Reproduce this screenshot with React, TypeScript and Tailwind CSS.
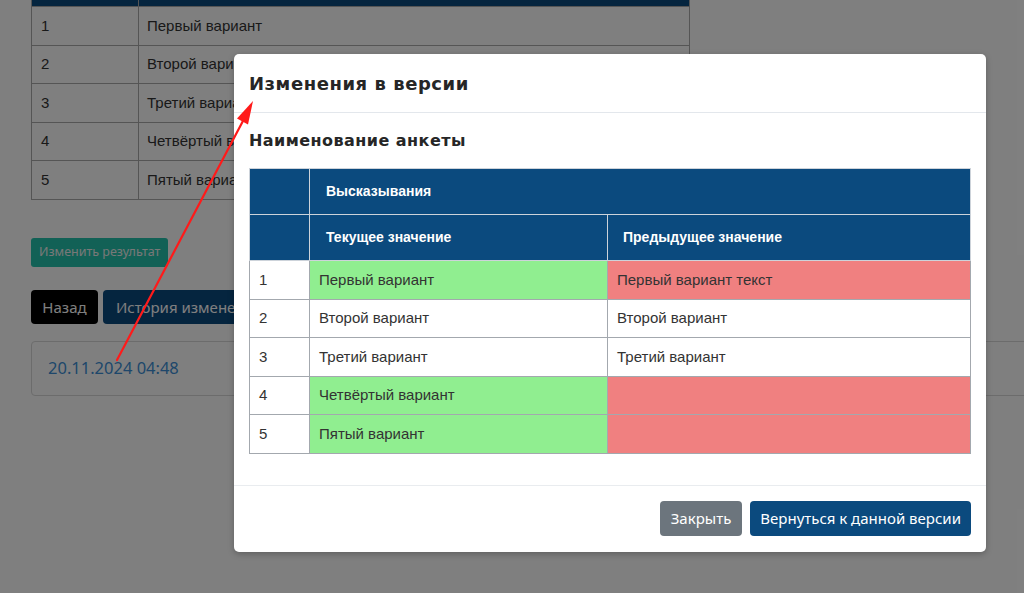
import React from "react";

const rows = [
  { n: "1", cur: "Первый вариант", prev: "Первый вариант текст", curBg: "bg-[#90ee90]", prevBg: "bg-[#f08080]" },
  { n: "2", cur: "Второй вариант", prev: "Второй вариант", curBg: "bg-white", prevBg: "bg-white" },
  { n: "3", cur: "Третий вариант", prev: "Третий вариант", curBg: "bg-white", prevBg: "bg-white" },
  { n: "4", cur: "Четвёртый вариант", prev: "", curBg: "bg-[#90ee90]", prevBg: "bg-[#f08080]" },
  { n: "5", cur: "Пятый вариант", prev: "", curBg: "bg-[#90ee90]", prevBg: "bg-[#f08080]" },
];

const bgRows = ["Первый вариант", "Второй вариант", "Третий вариант", "Четвёртый вариант", "Пятый вариант"];

export default function App() {
  return (
    <div className="relative w-[1024px] h-[593px] overflow-hidden bg-white font-['Liberation_Sans',Arial,sans-serif]">
      {/* background page */}
      <div className="pl-[31px] -mt-[34px]">
        <table className="w-[659px] border-collapse text-[15px] text-[#333]">
          <thead>
            <tr className="bg-[#0b4a7e]">
              <th className="w-[107px] h-[40px] border border-[#aaaaaa]"></th>
              <th className="h-[40px] border border-[#aaaaaa]"></th>
            </tr>
          </thead>
          <tbody>
            {bgRows.map((t, i) => (
              <tr key={i}>
                <td className="h-[38.6px] border border-[#aaaaaa] pl-[9px]">{i + 1}</td>
                <td className="h-[38.6px] border border-[#aaaaaa] pl-[8px]">{t}</td>
              </tr>
            ))}
          </tbody>
        </table>
        <div className="mt-[38px] font-['Noto_Sans',sans-serif]">
          <button className="h-[29px] px-[8px] rounded-[3px] bg-[#24c2ac] text-[#f0f0f0] text-[12.5px]">
            Изменить результат
          </button>
        </div>
        <div className="mt-[23px] flex gap-[5px] font-['Noto_Sans',sans-serif]">
          <button className="h-[34px] w-[67px] rounded-[4px] bg-black text-white text-[15px]">Назад</button>
          <button className="h-[34px] px-[13px] rounded-[4px] bg-[#0b4a7e] text-white text-[15px]">
            История изменений
          </button>
        </div>
        <div className="mt-[17px] w-[1100px] h-[55px] rounded-[4px] border border-[#d8d8d8] flex items-center pl-[16px] font-['Noto_Sans',sans-serif] text-[16.5px] text-[#3c8fd6]">
          20.11.2024 04:48
        </div>
      </div>

      {/* overlay */}
      <div className="absolute inset-0 bg-black/50"></div>

      {/* modal */}
      <div className="absolute left-[234px] top-[54px] w-[752px] bg-white rounded-[5px] shadow-[0_2px_6px_rgba(0,0,0,0.25)]">
        <div className="h-[59px] px-[15px] flex items-center border-b border-[#e3e7ec]">
          <h2 className="font-['DejaVu_Sans',sans-serif] font-bold text-[18px] text-[#262626] tracking-[0.55px]">
            Изменения в версии
          </h2>
        </div>
        <div className="px-[15px] pt-[16px] pb-[31px]">
          <h3 className="font-['DejaVu_Sans',sans-serif] font-bold text-[16px] leading-[24px] text-[#262626] tracking-[0.45px] mb-[15px]">
            Наименование анкеты
          </h3>
          <table className="w-[722px] border-collapse text-[15px] text-[#333]">
            <thead>
              <tr className="bg-[#0b4a7e] text-white text-[14px] font-bold">
                <th className="w-[60px] h-[46px] border border-[#cdd3da]"></th>
                <th colSpan={2} className="h-[46px] border border-[#cdd3da] text-left pl-[16px]">
                  Высказывания
                </th>
              </tr>
              <tr className="bg-[#0b4a7e] text-white text-[14px] font-bold">
                <th className="w-[60px] h-[46px] border border-[#cdd3da]"></th>
                <th className="w-[298px] h-[46px] border border-[#cdd3da] text-left pl-[16px]">
                  Текущее значение
                </th>
                <th className="h-[46px] border border-[#cdd3da] text-left pl-[15px]">Предыдущее значение</th>
              </tr>
            </thead>
            <tbody>
              {rows.map((r) => (
                <tr key={r.n}>
                  <td className="h-[38.6px] border border-[#a3a8ae] pl-[9px] bg-white">{r.n}</td>
                  <td className={`h-[38.6px] border border-[#a3a8ae] pl-[9px] ${r.curBg}`}>{r.cur}</td>
                  <td className={`h-[38.6px] border border-[#a3a8ae] pl-[9px] ${r.prevBg}`}>{r.prev}</td>
                </tr>
              ))}
            </tbody>
          </table>
        </div>
        <div className="border-t border-[#e9ecef] px-[15px] pt-[15px] pb-[16px] flex justify-end gap-[8px] font-['Noto_Sans',sans-serif]">
          <button className="h-[35px] px-[11px] rounded-[4px] bg-[#6c757d] text-white text-[15px]">Закрыть</button>
          <button className="h-[35px] px-[10px] rounded-[4px] bg-[#0b4a7e] text-white text-[15px]">
            Вернуться к данной версии
          </button>
        </div>
      </div>

      {/* annotation arrow */}
      <svg className="absolute inset-0 pointer-events-none" width="1024" height="593" viewBox="0 0 1024 593">
        <line x1="117" y1="360" x2="244" y2="119" stroke="#ff1a1a" strokeWidth="2.2" strokeLinecap="round" />
        <polygon points="253,101 248,124.5 237,118.5" fill="#ff1a1a" />
      </svg>
    </div>
  );
}
